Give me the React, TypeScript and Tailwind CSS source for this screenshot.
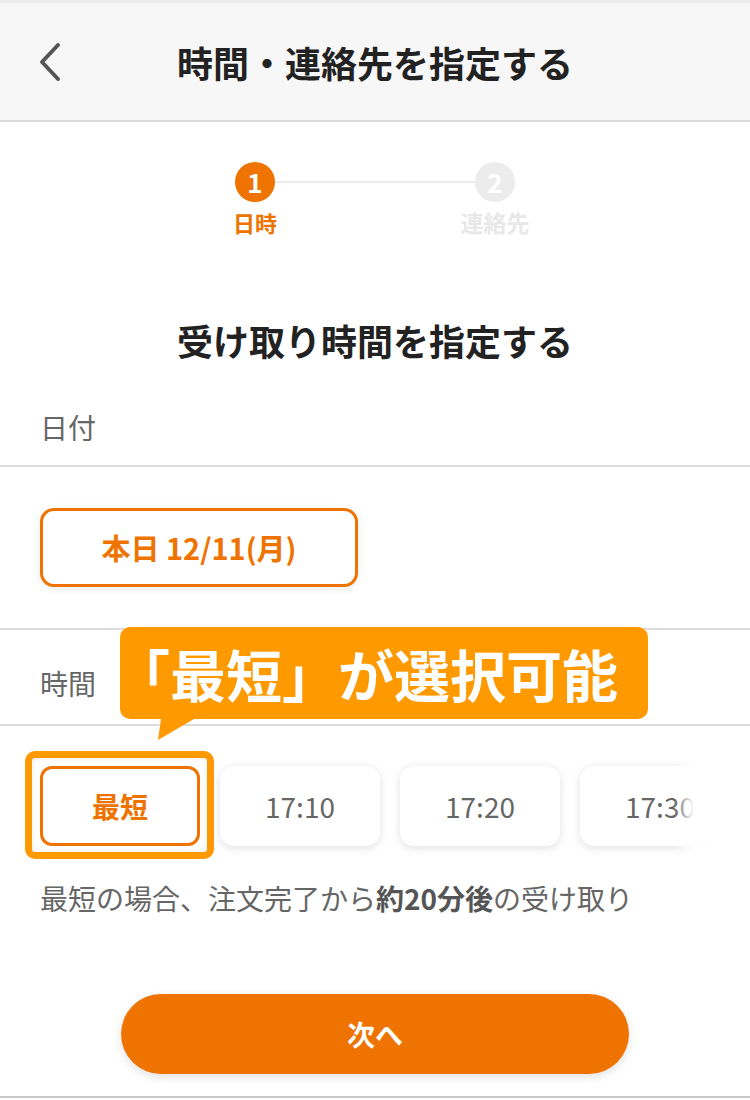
import React from "react";

const times = ["17:10", "17:20", "17:30"];

const Header: React.FC = () => (
  <div className="grid h-[122px] grid-cols-[1fr_auto_1fr] items-center border-t-[3px] border-b-2 border-t-[#ececec] border-b-[#dcdcdc] bg-[#f7f7f7]">
    <div className="pl-[38px]">
      <svg width="24" height="40" viewBox="0 0 24 40" fill="none">
        <polyline
          points="20,3 4,20 20,37"
          stroke="#555"
          strokeWidth="4"
          strokeLinecap="round"
          strokeLinejoin="round"
        />
      </svg>
    </div>
    <h1 className="text-[36px] font-bold leading-[50px] text-[#222]">時間・連絡先を指定する</h1>
    <div />
  </div>
);

const Stepper: React.FC = () => (
  <div className="flex flex-col items-center pt-[40px]">
    <div className="flex w-[280px] items-center">
      <div className="flex h-10 w-10 items-center justify-center rounded-full bg-[#ee7300] text-[26px] font-bold leading-none text-white">
        1
      </div>
      <div className="h-[2px] flex-1 bg-[#ececec]" />
      <div className="flex h-10 w-10 items-center justify-center rounded-full bg-[#ececec] text-[26px] font-bold leading-none text-white">
        2
      </div>
    </div>
    <div className="mt-[3px] flex w-[280px] justify-between">
      <div className="flex w-10 justify-center whitespace-nowrap text-[22px] font-bold leading-[34px] text-[#ee7300]">
        日時
      </div>
      <div className="flex w-10 justify-center whitespace-nowrap text-[23px] font-bold leading-[34px] text-[#e8e8e8]">
        連絡先
      </div>
    </div>
  </div>
);

const App: React.FC = () => {
  return (
    <div className="relative min-h-[1100px] w-full bg-white font-['Noto_Sans_CJK_JP','Noto_Sans',sans-serif]">
      <Header />
      <Stepper />

      <h2 className="mt-[76px] text-center text-[36px] font-bold leading-[50px] text-[#222]">
        受け取り時間を指定する
      </h2>

      {/* 日付 */}
      <div className="border-b-2 border-[#dcdcdc] px-10 pt-[42px] pb-[18px] text-[28px] leading-[40px] text-[#666]">
        日付
      </div>
      <div className="border-b-2 border-[#dcdcdc] px-10 pt-[41px] pb-[41px]">
        <button className="flex h-[79px] w-[318px] items-center justify-center rounded-[14px] border-[3px] border-[#ee7300] bg-white text-[29px] font-bold text-[#ee7300] shadow-[0_2px_10px_rgba(0,0,0,0.08)]">
          本日 12/11(月)
        </button>
      </div>

      {/* 時間 */}
      <div className="border-b-2 border-[#dcdcdc] px-10 pt-[33px] pb-[21px] text-[28px] leading-[40px] text-[#666]">
        時間
      </div>

      <div className="relative flex gap-5 overflow-hidden px-10 pt-[40px] pb-[14px]">
        <div className="relative shrink-0">
          <div className="absolute -top-[15px] -right-[14px] -bottom-[13px] -left-[15px] rounded-[10px] border-[7px] border-[#ff9900] bg-white shadow-[inset_0_0_6px_rgba(0,0,0,0.08)]" />
          <button className="relative flex h-20 w-40 items-center justify-center rounded-[12px] border-[3px] border-[#ee7300] bg-white text-[28px] font-bold text-[#ee7300]">
            最短
          </button>
        </div>
        {times.map((t) => (
          <button
            key={t}
            className="flex h-20 w-40 shrink-0 items-center justify-center rounded-[14px] bg-white text-[28px] text-[#666] shadow-[0_2px_10px_rgba(0,0,0,0.12)]"
          >
            {t}
          </button>
        ))}
        <div className="pointer-events-none absolute top-0 right-0 bottom-0 w-[76px] bg-linear-to-r from-white/0 via-white/95 via-[25%] to-white" />
      </div>

      <p className="mt-[18px] px-10 text-[28px] leading-[40px] text-[#666]">
        最短の場合、注文完了から<span className="font-bold text-[#555]">約20分後</span>の受け取り
      </p>

      <div className="mt-[76px] flex justify-center">
        <button className="h-20 w-[508px] rounded-full bg-[#ee7300] text-[28px] font-bold text-white shadow-[0_3px_10px_rgba(0,0,0,0.12)]">
          次へ
        </button>
      </div>

      <div className="mt-[22px] h-[2px] w-full bg-[#c8c8c8]" />

      {/* tooltip */}
      <div className="absolute top-[627px] left-[120px] flex h-[92px] w-[528px] items-center justify-center whitespace-nowrap rounded-[10px] bg-[#ff9900] pr-[36px] text-[56px] font-bold leading-none text-white">
        「最短」が選択可能
        <svg
          className="absolute top-full left-[38px]"
          width="36"
          height="21"
          viewBox="0 0 36 21"
        >
          <polygon points="3,0 36,0 0,21" fill="#ff9900" />
        </svg>
      </div>
    </div>
  );
};

export default App;
